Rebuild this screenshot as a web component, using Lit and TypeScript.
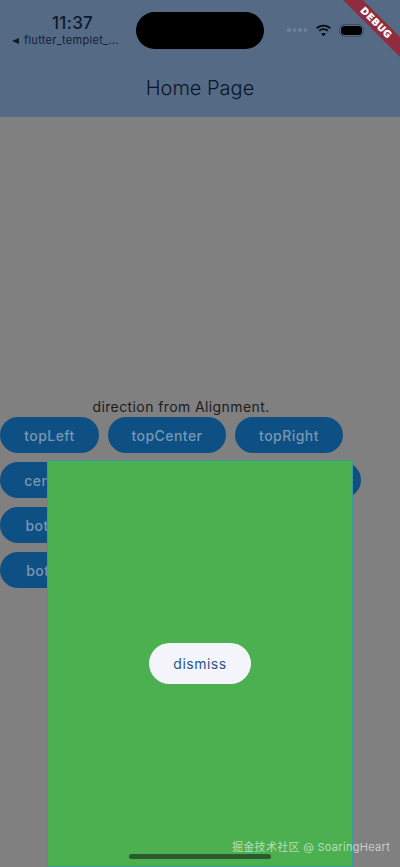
import { LitElement, html, css } from "lit";
import { customElement } from "lit/decorators.js";

const rows: { label: string; w: number }[][] = [
  [{ label: "topLeft", w: 99 }, { label: "topCenter", w: 118 }, { label: "topRight", w: 108 }],
  [{ label: "centerLeft", w: 122 }, { label: "center", w: 92 }, { label: "centerRight", w: 129 }],
  [{ label: "bottomLeft", w: 128 }],
  [{ label: "bottomCenter", w: 150 }],
];

@customElement("app-root")
export class AppRoot extends LitElement {
  static styles = css`
    :host { display: block; width: 400px; height: 867px; position: relative; overflow: hidden; background: #808080; font-family: Inter, "Liberation Sans", "Noto Sans CJK SC", sans-serif; }
    .page { display: flex; flex-direction: column; height: 100%; }
    .appbar { height: 117px; flex: none; background: #556a85; display: flex; flex-direction: column; color: #0f1a2c; }
    .status { height: 68px; flex: none; display: flex; padding: 14px 0 0 12px; box-sizing: border-box; }
    .left { width: 120px; display: flex; flex-direction: column; align-items: flex-start; }
    .time { font-size: 17px; line-height: 19px; font-weight: 500; letter-spacing: .3px; color: #101a2a; margin-left: 40px; }
    .back { display: flex; align-items: center; gap: 5px; font-size: 11px; line-height: 13px; letter-spacing: .3px; color: #142036; white-space: nowrap; margin-top: 1px; }
    .back i { width: 0; height: 0; border-style: solid; border-width: 3.5px 7px 3.5px 0; border-color: transparent #101a2a transparent transparent; }
    .island { width: 128px; height: 37px; margin: -2px 0 0 4px; flex: none; background: #000; border-radius: 18.5px; }
    .sys { display: flex; align-items: center; height: 20px; margin: 6px 0 0 23px; }
    .dots { display: flex; gap: 2px; margin-right: 8px; }
    .dots i { width: 3.5px; height: 3.5px; border-radius: 50%; background: #6f8098; }
    .batt { width: 21px; height: 9px; margin-left: 9px; background: #000; border-radius: 3.5px; outline: 1px solid #3d4c63; outline-offset: 1px; }
    .title { flex: 1; display: flex; align-items: center; justify-content: center; font-size: 20px; font-weight: 350; color: #0c1626; padding-bottom: 10px; }
    .body { flex: 1; padding-top: 280px; }
    .content { width: 362px; display: flex; flex-direction: column; }
    .desc { text-align: center; font-size: 14px; line-height: 20px; letter-spacing: .4px; color: #1c1c1e; }
    .rows { display: flex; flex-direction: column; gap: 9px; }
    .row { display: flex; gap: 9px; }
    .btn { height: 36px; border-radius: 18px; background: #0e5083; color: #7897b3; display: flex; align-items: center; justify-content: center; font-size: 14px; letter-spacing: .45px; font-weight: 500; }
    .sheet { position: absolute; left: 48px; right: 48px; top: 461px; bottom: 1px; background: #4caf50; box-shadow: 0 0 0 1px #3a9a9c; display: flex; align-items: center; justify-content: center; }
    .dismiss { width: 102px; height: 41px; border-radius: 21px; background: #f3f5fb; color: #2a5689; display: flex; align-items: center; justify-content: center; font-size: 14px; letter-spacing: .5px; }
    .handle { position: absolute; left: 129px; top: 854px; width: 142px; height: 4.5px; border-radius: 3px; background: #2a5a2e; }
    .mark { position: absolute; left: 232px; top: 839px; font-size: 11px; line-height: 16px; letter-spacing: .3px; color: rgba(255,255,255,.6); white-space: nowrap; }
    .ribbon { position: absolute; width: 84px; height: 14px; top: 16px; right: -18px; transform: rotate(45deg); background: #8f2c3e; color: #fff; font-size: 9.5px; font-weight: 700; line-height: 14px; text-align: center; letter-spacing: .5px; font-family: "DejaVu Sans", sans-serif; -webkit-text-stroke: .3px #fff; }
  `;

  render() {
    return html`
      <div class="page">
        <header class="appbar">
          <div class="status">
            <div class="left">
              <div class="time">11:37</div>
              <div class="back"><i></i>flutter_templet_...</div>
            </div>
            <div class="island"></div>
            <div class="sys">
              <div class="dots"><i></i><i></i><i></i><i></i></div>
              <svg width="17" height="13" viewBox="0 0 17 13" fill="#050a12">
                <path d="M8.5 2.6c2.4 0 4.6.9 6.3 2.5l1.2-1.3C14 1.9 11.4.8 8.5.8S3 1.9 1 3.8l1.2 1.3C3.900 3.500 6.100 2.600 8.500 2.600z"/>
                <path d="M8.500 6.100c1.400 0 2.600.5 3.600 1.400l1.200-1.300C12 5 10.300 4.300 8.500 4.300S5 5 3.700 6.200l1.200 1.300c1-.9 2.200-1.400 3.600-1.400z"/>
                <path d="M8.500 12.300l2.300-2.500c-.6-.6-1.400-.9-2.300-.9s-1.700.3-2.300.9z"/>
              </svg>
              <div class="batt"></div>
            </div>
          </div>
          <div class="title">Home Page</div>
        </header>
        <main class="body">
          <div class="content">
            <div class="desc">direction from Alignment.</div>
            <div class="rows">
              ${rows.map(
                (r) => html`<div class="row">
                  ${r.map((b) => html`<div class="btn" style="width:${b.w}px">${b.label}</div>`)}
                </div>`
              )}
            </div>
          </div>
        </main>
      </div>
      <div class="sheet"><div class="dismiss">dismiss</div></div>
      <div class="handle"></div>
      <div class="mark">掘金技术社区 @ SoaringHeart</div>
      <div class="ribbon">DEBUG</div>
    `;
  }
}
